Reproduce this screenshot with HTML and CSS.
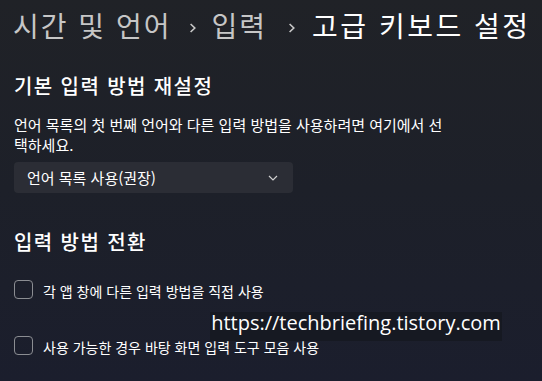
FILE: index.html
```html
<!DOCTYPE html>
<html lang="ko">
<head>
<meta charset="utf-8">
<link rel="stylesheet" href="styles.css">
</head>
<body>
<div class="page">
  <header class="crumbs">
    <span class="crumb">시간 및 언어</span>
    <svg class="sep" width="8" height="10" viewBox="0 0 8 10"><path d="M1.6 1 L5.8 5 L1.6 9" fill="none" stroke="#c8c8c8" stroke-width="1.6"/></svg>
    <span class="crumb">입력</span>
    <svg class="sep sep-last" width="8" height="10" viewBox="0 0 8 10"><path d="M1.6 1 L5.8 5 L1.6 9" fill="none" stroke="#c8c8c8" stroke-width="1.6"/></svg>
    <span class="crumb current">고급 키보드 설정</span>
  </header>

  <section class="section first">
    <h2 class="title">기본 입력 방법 재설정</h2>
    <p class="desc">언어 목록의 첫 번째 언어와 다른 입력 방법을 사용하려면 여기에서 선택하세요.</p>
    <div class="select">
      <span>언어 목록 사용(권장)</span>
      <svg width="10" height="6" viewBox="0 0 10 6"><path d="M1 1 L5 5 L9 1" fill="none" stroke="#d0d0d0" stroke-width="1.2"/></svg>
    </div>
  </section>

  <section class="section second">
    <h2 class="title">입력 방법 전환</h2>
    <label class="check"><span class="box"></span><span class="label">각 앱 창에 다른 입력 방법을 직접 사용</span></label>
    <label class="check"><span class="box"></span><span class="label">사용 가능한 경우 바탕 화면 입력 도구 모음 사용</span></label>
  </section>
</div>
<div class="watermark">https://techbriefing.tistory.com</div>
</body>
</html>
```

FILE: styles.css
```css
html, body {
  margin: 0;
  padding: 0;
}
body {
  width: 542px;
  height: 381px;
  overflow: hidden;
  background: linear-gradient(to bottom, #202227 0%, #1d2029 50%, #1b1e2d 100%);
  color: #ffffff;
  font-family: "Noto Sans CJK KR", "Noto Sans", sans-serif;
  position: relative;
}
.page {
  padding: 0 14px;
}
.crumbs {
  display: flex;
  align-items: center;
  height: 50px;
  margin-left: -1px;
  font-size: 28px;
  letter-spacing: 2px;
  line-height: 50px;
  color: #c6c6c6;
}
.crumb {
  white-space: nowrap;
}
.crumb.current {
  color: #ffffff;
  letter-spacing: 2.5px;
}
.sep {
  flex: none;
  margin: 6px 14px 0 18px;
}
.sep.sep-last {
  margin-left: 21px;
  margin-right: 16px;
}
.title {
  margin: 0;
  font-size: 20px;
  font-weight: 500;
  letter-spacing: 1.4px;
  line-height: 28px;
}
.section.first {
  margin-top: 22px;
}
.desc {
  margin: 15px 0 0;
  font-size: 15px;
  line-height: 20px;
  width: 438px;
}
.select {
  margin-top: 7px;
  width: 279px;
  height: 31px;
  box-sizing: border-box;
  background: #2b2d35;
  border-radius: 4px;
  display: flex;
  align-items: center;
  justify-content: space-between;
  padding: 0 15px 0 13px;
  font-size: 15px;
}
.section.second {
  margin-top: 35px;
}
.check {
  display: flex;
  align-items: center;
  gap: 10px;
  font-size: 14px;
  height: 20px;
  margin-top: 23px;
}
.check + .check {
  margin-top: 36px;
}
.label {
  padding-top: 3px;
}
.box {
  width: 17px;
  height: 17px;
  border: 1px solid #8b8d92;
  border-radius: 4px;
  flex: none;
}
.watermark {
  position: absolute;
  left: 210px;
  top: 312px;
  width: 292px;
  height: 29px;
  background: #161922;
  color: #ffffff;
  font-family: "Open Sans", "Noto Sans", sans-serif;
  font-size: 20px;
  line-height: 21px;
  text-align: center;
  white-space: nowrap;
}
```
